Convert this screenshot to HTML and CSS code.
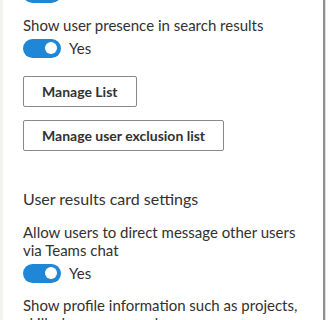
FILE: index.html
```html
<!DOCTYPE html>
<html lang="en">
<head>
    <meta charset="UTF-8">
    <meta name="viewport" content="width=device-width, initial-scale=1.0">
    <title>Search settings</title>
    <link rel="stylesheet" href="styles.css">
</head>
<body>
    <div class="frame">
        <div class="panel">
            <div class="toggle-row first">
                <span class="toggle on"><span class="knob"></span></span>
            </div>

            <div class="setting">
                <div class="label">Show user presence in search results</div>
                <div class="toggle-row">
                    <span class="toggle on"><span class="knob"></span></span>
                    <span class="state">Yes</span>
                </div>
            </div>

            <button class="btn btn-list">Manage List</button>
            <button class="btn btn-exclusion">Manage user exclusion list</button>

            <h2 class="section-title">User results card settings</h2>

            <div class="setting">
                <div class="label">Allow users to direct message other users via Teams chat</div>
                <div class="toggle-row">
                    <span class="toggle on"><span class="knob"></span></span>
                    <span class="state">Yes</span>
                </div>
            </div>

            <div class="setting">
                <div class="label">Show profile information such as projects, skills, languages, and more</div>
            </div>
        </div>
        <div class="edge"></div>
    </div>
</body>
</html>
```

FILE: styles.css
```css
body {
    margin: 0;
    background-color: #ffffff;
    color: #323130;
    font-family: 'Lato', 'Noto Sans', sans-serif;
    font-size: 15px;
    height: 320px;
    overflow: hidden;
}
.frame {
    display: flex;
    height: 320px;
    border-left: 3px solid #f3f2f1;
}
.panel {
    width: 300px;
    padding: 0 0 0 20px;
    border-right: 2px solid #8f8f8f;
    overflow: hidden;
}
.edge {
    width: 1px;
    background: #e1e1e1;
}
.toggle-row {
    display: flex;
    align-items: center;
    gap: 8px;
    height: 20px;
}
.toggle-row.first {
    margin-top: -17px;
    margin-bottom: 13px;
}
.toggle {
    width: 38px;
    height: 19px;
    border-radius: 10px;
    background: #1f87d6;
    display: flex;
    align-items: center;
    justify-content: flex-end;
    padding-right: 4px;
    box-sizing: border-box;
}
.knob {
    width: 12px;
    height: 12px;
    border-radius: 50%;
    background: #ffffff;
}
.label {
    line-height: 18px;
    margin-bottom: 4px;
    width: 280px;
}
.state {
    line-height: 18px;
}
.btn {
    display: block;
    height: 31px;
    padding: 0 18px;
    background: #ffffff;
    border: 1px solid #8a8886;
    border-radius: 2px;
    font-family: inherit;
    font-size: 14px;
    font-weight: 700;
    color: #323130;
}
.btn-list {
    margin-top: 18px;
}
.btn-exclusion {
    margin-top: 13px;
}
.section-title {
    font-size: 16px;
    font-weight: 400;
    line-height: 22px;
    margin: 37px 0 13px;
}
.setting + .setting {
    margin-top: 13px;
}
```
